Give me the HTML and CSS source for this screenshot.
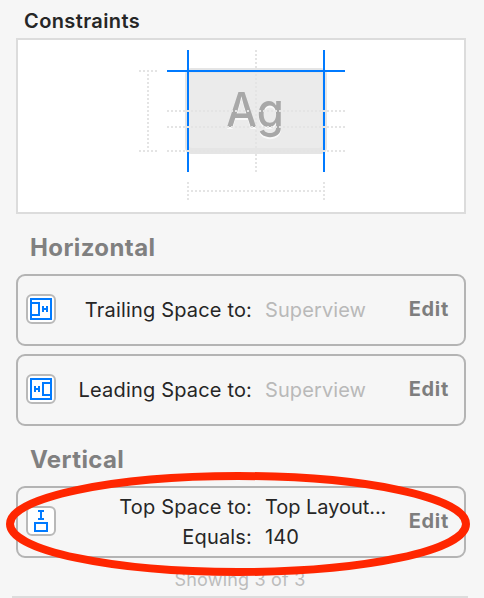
FILE: index.html
```
<!DOCTYPE html>
<html lang="en">
<head>
<meta charset="utf-8">
<title>Constraints</title>
<link rel="stylesheet" href="styles.css">
</head>
<body>
<main class="inspector">
  <h1 class="title">Constraints</h1>
  <div class="preview">
    <svg viewBox="18 40 446 172" width="446" height="172">
      <rect x="185" y="68" width="142" height="86" rx="6" fill="#e5e5e5"/>
      <rect x="189" y="73" width="133" height="75" rx="3" fill="#ebebeb"/>
      <text class="sample" x="226" y="127" textLength="58" lengthAdjust="spacingAndGlyphs">Ag</text>
      <path class="line" d="M188 50V172M324 50V172M167 71H345"/>
      <path class="dots" d="M167 111H345M167 127H345M167 151H345M256 50V70M256 74V172M139 71H157M148 74V150M139 151H157M188 182V200M191 191H323M324 182V200"/>
    </svg>
  </div>

  <h2 class="section">Horizontal</h2>
  <div class="card">
    <svg class="icon" viewBox="0 0 30 30" width="30" height="30">
      <rect class="icon-frame" x="1" y="1" width="28" height="28" rx="5"/>
      <path class="glyph" d="M5 5H25V25H5ZM5 9H13V21H5M17 12V18M21 12V18M17 15H21"/>
    </svg>
    <dl class="fields"><dt>Trailing Space to:</dt><dd class="muted">Superview</dd></dl>
    <span class="edit">Edit</span>
  </div>
  <div class="card">
    <svg class="icon" viewBox="0 0 30 30" width="30" height="30">
      <rect class="icon-frame" x="1" y="1" width="28" height="28" rx="5"/>
      <path class="glyph" d="M5 5H25V25H5ZM25 9H17V21H25M9 12V18M13 12V18M9 15H13"/>
    </svg>
    <dl class="fields"><dt>Leading Space to:</dt><dd class="muted">Superview</dd></dl>
    <span class="edit">Edit</span>
  </div>

  <h2 class="section second">Vertical</h2>
  <div class="card">
    <svg class="icon" viewBox="0 0 30 30" width="30" height="30">
      <rect class="icon-frame" x="1" y="1" width="28" height="28" rx="5"/>
      <path class="glyph" d="M12 5H18M15 5V13M12 13H18M9 17H21V25H9Z"/>
    </svg>
    <dl class="fields"><dt>Top Space to:</dt><dd class="tight">Top Layout...</dd><dt>Equals:</dt><dd>140</dd></dl>
    <span class="edit">Edit</span>
  </div>
  <p class="status">Showing 3 of 3</p>
  <svg class="highlight" viewBox="0 0 464 104" width="464" height="104">
    <ellipse cx="232" cy="52" rx="228" ry="48"/>
  </svg>
</main>
</body>
</html>
```
FILE: styles.css
```
* { box-sizing: border-box; margin: 0; }
body {
  background: #f6f6f6;
  color: #262626;
  font-family: Inter, "Liberation Sans", sans-serif;
  font-size: 20px;
}
.inspector {
  position: relative;
  width: 484px;
  height: 598px;
  padding: 6px 18px 0 16px;
  overflow: hidden;
}
.title {
  height: 32px;
  padding-left: 8px;
  font-size: 20px;
  font-weight: 600;
  line-height: 30px;
  letter-spacing: 0.4px;
}
.preview {
  height: 176px;
  border: 2px solid #dcdcdc;
  background: #fff;
}
.preview svg, .icon { display: block; }
.sample {
  font-size: 48px;
  font-weight: 500;
  fill: #a8a8a8;
  filter: drop-shadow(0 2px 0 #fafafa);
}
.line { fill: none; stroke: #007aff; stroke-width: 2; }
.dots { fill: none; stroke: #e4e4e4; stroke-width: 2; stroke-dasharray: 2 2; }
.section {
  height: 60px;
  padding: 18px 0 0 14px;
  color: #808080;
  font-size: 24px;
  font-weight: 700;
  line-height: 32px;
  letter-spacing: 0.4px;
}
.section.second { margin-top: -8px; }
.card {
  display: flex;
  align-items: center;
  height: 72px;
  margin-bottom: 8px;
  padding: 0 15px 0 8px;
  border: 2px solid #b4b4b4;
  border-radius: 9px;
}
.icon { flex: none; margin-top: -2px; }
.icon-frame { fill: #fff; stroke: #b9b9b9; stroke-width: 2; }
.glyph { fill: none; stroke: #007aff; stroke-width: 2; }
.fields {
  display: grid;
  grid-template-columns: 196px 1fr;
  column-gap: 13px;
  flex: 1;
  line-height: 30px;
}
.fields dt { text-align: right; white-space: nowrap; letter-spacing: 0.17px; }
.fields dd { white-space: nowrap; letter-spacing: 0.1px; }
.fields .tight { letter-spacing: -0.05px; }
.fields .muted { color: #b9b9b9; }
.edit {
  margin-top: -2px;
  color: #7e7e7e;
  font-weight: 700;
  letter-spacing: 0.7px;
}
.status {
  height: 32px;
  margin: 0 -2px 0 -4px;
  border-bottom: 2px solid #dcdcdc;
  color: #bcbcbc;
  font-size: 18px;
  line-height: 28px;
  letter-spacing: 0.2px;
  text-align: center;
}
.highlight { position: absolute; left: 6px; top: 472px; }
.highlight ellipse { fill: none; stroke: #ff2600; stroke-width: 8; }
```
